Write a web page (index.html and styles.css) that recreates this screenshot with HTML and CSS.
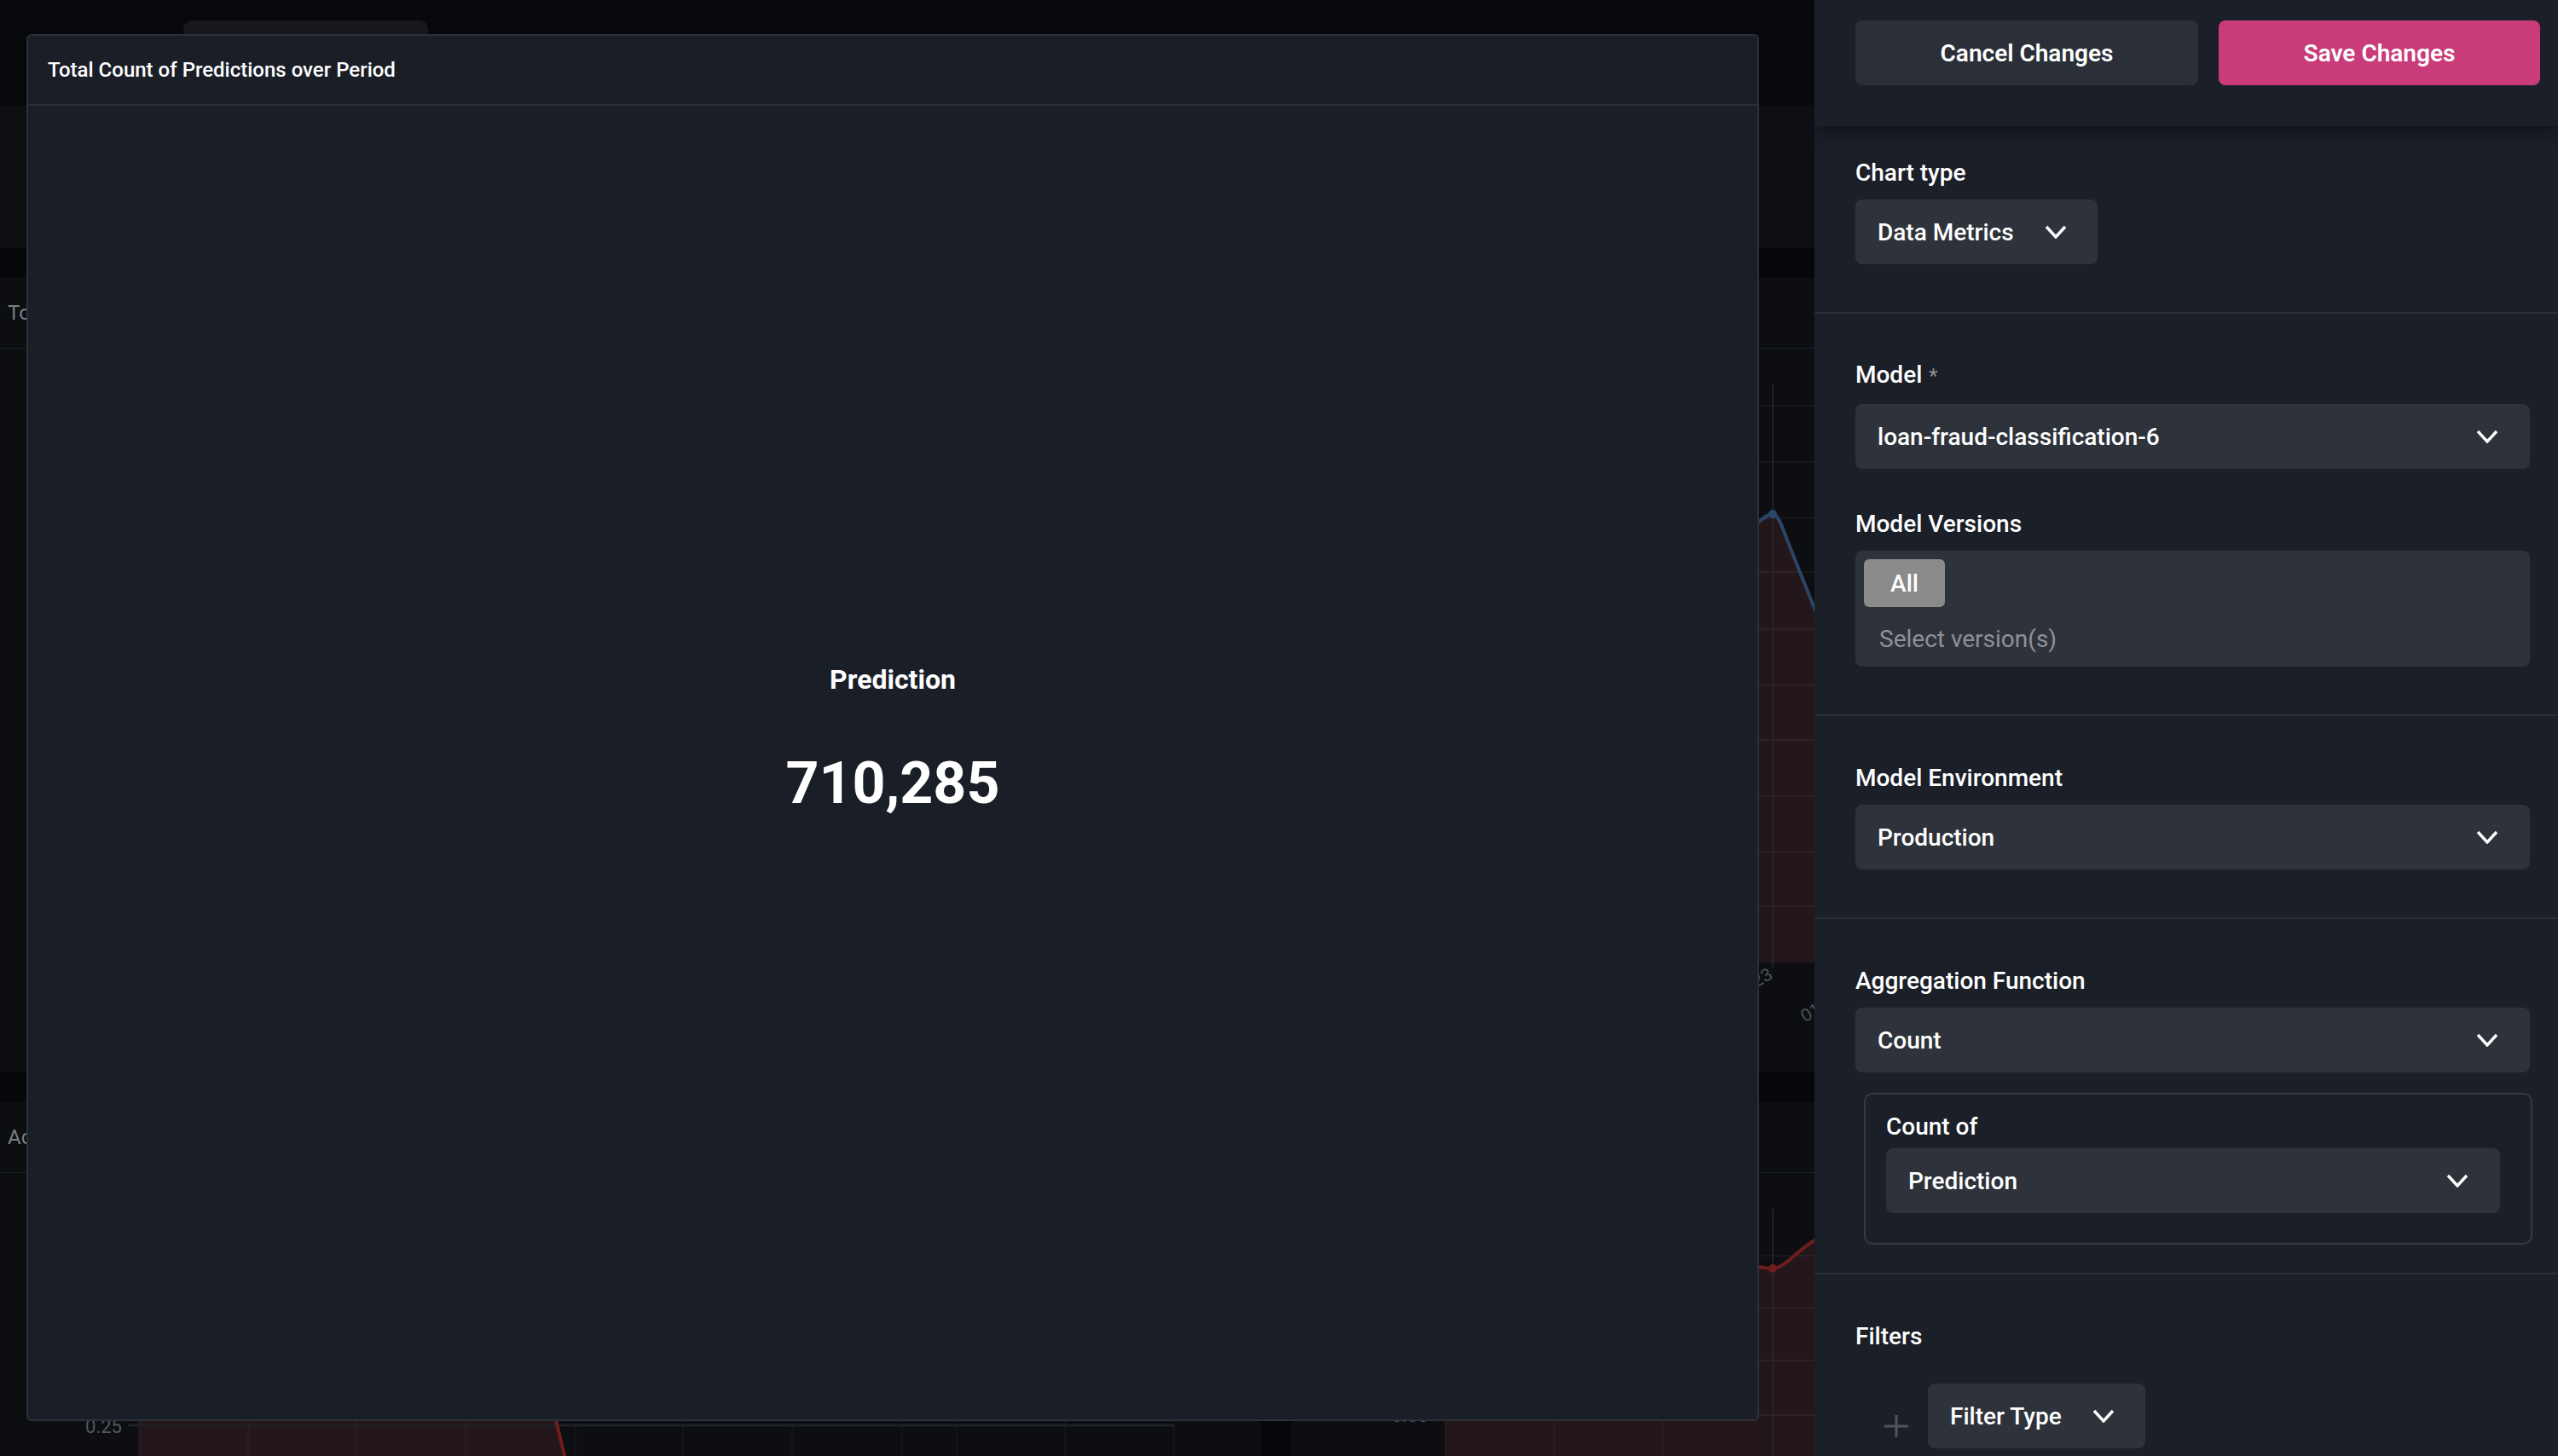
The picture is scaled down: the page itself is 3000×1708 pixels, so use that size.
FILE: index.html
```html
<!DOCTYPE html>
<html>
<head>
<meta charset="utf-8">
<title>Edit Chart</title>
<link rel="stylesheet" href="styles.css">
</head>
<body>
<div class="app">
  <header class="topbar"><div class="tab"></div></header>
  <div class="subbar"></div>
  <main class="board">
    <section class="card">
      <div class="card-title">Total Count of Predictions over Period</div>
    </section>
    <section class="card">
      <div class="card-title">Prediction Distribution over Period</div>
      <svg class="plot" width="1486" height="849" viewBox="0 0 1486 849">
        <g class="vgrid">
          <line x1="181" y1="67" x2="181" y2="720"/><line x1="309" y1="67" x2="309" y2="720"/><line x1="436" y1="67" x2="436" y2="720"/><line x1="691" y1="67" x2="691" y2="720"/><line x1="819" y1="67" x2="819" y2="720"/><line x1="946" y1="67" x2="946" y2="720"/>
        </g>
        <path class="area-red" d="M181 300 C300 260 450 215 549 203 C556 197 560 194 565 194 C572 194 577 212 583 227 L660 420 C700 500 800 520 1000 480 L1460 400 L1460 720 L181 720 Z"/>
        <g class="hgrid">
          <line x1="181" y1="67" x2="1460" y2="67"/><line x1="181" y1="133" x2="1460" y2="133"/><line x1="181" y1="199" x2="1460" y2="199"/><line x1="181" y1="262" x2="1460" y2="262"/><line x1="181" y1="329" x2="1460" y2="329"/><line x1="181" y1="395" x2="1460" y2="395"/><line x1="181" y1="459" x2="1460" y2="459"/><line x1="181" y1="525" x2="1460" y2="525"/><line x1="181" y1="590" x2="1460" y2="590"/><line x1="181" y1="654" x2="1460" y2="654"/>
        </g>
        <line class="cross" x1="565" y1="41" x2="565" y2="727"/>
        <path class="line-blue" d="M181 300 C300 260 450 215 549 203 C556 197 560 194 565 194 C572 194 577 212 583 227 L660 420 C700 500 800 520 1000 480 L1460 400"/>
        <circle class="dot-blue" cx="565" cy="194" r="5"/>
        <text class="axis-label" transform="translate(566 738) rotate(-30)" text-anchor="end">01/22/2023</text>
        <text class="axis-label" transform="translate(694 738) rotate(-30)" text-anchor="end">01/23/2023</text>
      </svg>
    </section>
    <section class="card">
      <div class="card-title">Accuracy over Period</div>
      <svg class="plot" width="1479" height="340" viewBox="0 0 1479 340">
        <path class="area-red" d="M163 0 L560 0 C600 0 630 120 652 290 L664 340 L163 340 Z"/>
        <g class="vgrid">
          <line x1="163" y1="0" x2="163" y2="340"/><line x1="291" y1="0" x2="291" y2="340"/><line x1="418" y1="0" x2="418" y2="340"/><line x1="546" y1="0" x2="546" y2="340"/><line x1="675" y1="0" x2="675" y2="340"/><line x1="801" y1="0" x2="801" y2="340"/><line x1="929" y1="0" x2="929" y2="340"/><line x1="1058" y1="0" x2="1058" y2="340"/><line x1="1122" y1="0" x2="1122" y2="340"/><line x1="1249" y1="0" x2="1249" y2="340"/><line x1="1377" y1="0" x2="1377" y2="340"/>
        </g>
        <line class="axis" x1="150" y1="296" x2="1377" y2="296"/>
        <path class="line-red" d="M560 0 C600 0 630 120 652 290 L664 340"/>
        <text class="tick-label" x="143" y="305" text-anchor="end">0.25</text>
      </svg>
    </section>
    <section class="card">
      <div class="card-title">Prediction Score over Period</div>
      <svg class="plot" width="1486" height="340" viewBox="0 0 1486 340">
        <path class="area-red" d="M181 150 C300 120 450 100 549 110 C555 111 560 112 565 112 C578 112 595 90 614 79 C700 40 900 60 1460 100 L1460 340 L181 340 Z"/>
        <g class="vgrid">
          <line x1="181" y1="0" x2="181" y2="340"/><line x1="309" y1="0" x2="309" y2="340"/><line x1="436" y1="0" x2="436" y2="340"/><line x1="691" y1="0" x2="691" y2="340"/><line x1="819" y1="0" x2="819" y2="340"/>
        </g>
        <g class="hgrid">
          <line x1="181" y1="97" x2="1460" y2="97"/><line x1="181" y1="158" x2="1460" y2="158"/><line x1="181" y1="220" x2="1460" y2="220"/><line x1="170" y1="284" x2="1460" y2="284"/>
        </g>
        <line class="cross" x1="565" y1="42" x2="565" y2="340"/>
        <path class="line-red" d="M181 150 C300 120 450 100 549 110 C555 111 560 112 565 112 C578 112 595 90 614 79 C700 40 900 60 1460 100"/>
        <circle class="dot-red" cx="565" cy="112" r="5"/>
        <text class="tick-label" x="161" y="292" text-anchor="end">0.50</text>
      </svg>
    </section>
  </main>
</div>

<div class="modal">
  <div class="modal-head">Total Count of Predictions over Period</div>
  <div class="modal-body">
    <div class="metric-name">Prediction</div>
    <div class="metric-value">710,285</div>
  </div>
</div>

<aside class="drawer">
  <div class="drawer-head">
    <button class="btn btn-cancel">Cancel Changes</button>
    <button class="btn btn-save">Save Changes</button>
  </div>
  <div class="drawer-body">
    <section class="group first">
      <div class="label">Chart type</div>
      <div class="select inline"><span>Data Metrics</span><svg class="chev" viewBox="0 0 26 16"><polyline points="2,2 13,14 24,2"/></svg></div>
    </section>
    <section class="group model-group">
      <div class="field">
        <div class="label model">Model<span class="req">*</span></div>
        <div class="select"><span>loan-fraud-classification-6</span><svg class="chev" viewBox="0 0 26 16"><polyline points="2,2 13,14 24,2"/></svg></div>
      </div>
      <div class="field">
        <div class="label">Model Versions</div>
        <div class="versions">
          <div class="chip">All</div>
          <div class="placeholder">Select version(s)</div>
        </div>
      </div>
    </section>
    <section class="group">
      <div class="label">Model Environment</div>
      <div class="select"><span>Production</span><svg class="chev" viewBox="0 0 26 16"><polyline points="2,2 13,14 24,2"/></svg></div>
    </section>
    <section class="group agg">
      <div class="label">Aggregation Function</div>
      <div class="select"><span>Count</span><svg class="chev" viewBox="0 0 26 16"><polyline points="2,2 13,14 24,2"/></svg></div>
      <div class="count-box">
        <div class="label tight">Count of</div>
        <div class="select full"><span>Prediction</span><svg class="chev" viewBox="0 0 26 16"><polyline points="2,2 13,14 24,2"/></svg></div>
      </div>
    </section>
    <section class="group last">
      <div class="label">Filters</div>
      <div class="filter-row">
        <svg class="plus" viewBox="0 0 28 26"><line x1="14" y1="0" x2="14" y2="26"/><line x1="0" y1="13" x2="28" y2="13"/></svg>
        <div class="select inline"><span>Filter Type</span><svg class="chev" viewBox="0 0 26 16"><polyline points="2,2 13,14 24,2"/></svg></div>
      </div>
    </section>
  </div>
</aside>
</body>
</html>
```

FILE: styles.css
```css
* { box-sizing: border-box; }

body {
  margin: 0;
  width: 3000px;
  height: 1708px;
  overflow: hidden;
  position: relative;
  background: #07080b;
  font-family: Roboto, "Noto Sans", "Liberation Sans", sans-serif;
  color: #fff;
}

/* ---------- dimmed dashboard behind ---------- */
.app {
  display: flex;
  flex-direction: column;
  height: 1708px;
}

.topbar {
  flex: none;
  height: 123px;
  background: #07080b;
  padding: 24px 0 0 215px;
}

.tab {
  width: 287px;
  height: 99px;
  background: #16181c;
  border-radius: 10px 10px 0 0;
}

.subbar {
  flex: none;
  height: 168px;
  background: #0d0f13;
}

.board {
  flex: 1;
  min-height: 0;
  background: #05070a;
  padding-top: 35px;
  display: grid;
  grid-template-columns: 1479px 1fr;
  grid-template-rows: 932px 1fr;
  gap: 35px;
}

.card {
  background: #0c0e12;
  display: flex;
  flex-direction: column;
  overflow: hidden;
  min-height: 0;
}

.card-title {
  flex: none;
  height: 83px;
  border-bottom: 1px solid #1c1f24;
  display: flex;
  align-items: center;
  padding-left: 9px;
  font-size: 24px;
  color: #7b7e83;
  white-space: nowrap;
}

.plot { display: block; flex: none; }

.vgrid line { stroke: rgba(255, 255, 255, 0.045); stroke-width: 1.5; }
.hgrid line { stroke: rgba(255, 255, 255, 0.06); stroke-width: 1.5; }
.area-red { fill: #24171b; }
.cross { stroke: #26292e; stroke-width: 1.5; }
.line-blue { fill: none; stroke: #2b4566; stroke-width: 4; }
.dot-blue { fill: #2b4566; }
.line-red { fill: none; stroke: #6e1c1d; stroke-width: 4; }
.dot-red { fill: #6e1c1d; }
.axis { stroke: #1e2126; stroke-width: 3; }
.axis-label { font-family: "Liberation Sans", sans-serif; font-size: 21px; fill: #4f5258; }
.tick-label { font-family: Roboto, sans-serif; font-size: 22px; fill: #55585e; }

/* ---------- modal ---------- */
.modal {
  position: absolute;
  left: 31px;
  top: 40px;
  width: 2032px;
  height: 1627px;
  background: #1a1e27;
  border: 2px solid #2b3039;
  border-radius: 6px;
  display: flex;
  flex-direction: column;
}

.modal-head {
  flex: none;
  height: 82px;
  border-bottom: 2px solid #2b3039;
  display: flex;
  align-items: center;
  padding-left: 23px;
  font-size: 24px;
  font-weight: 500;
}

.modal-body {
  flex: 1;
  display: flex;
  flex-direction: column;
  align-items: center;
  padding-top: 653px;
}

.metric-name {
  font-size: 32px;
  line-height: 40px;
  font-weight: 700;
}

.metric-value {
  margin-top: 62px;
  font-size: 68px;
  line-height: 80px;
  font-weight: 700;
}

/* ---------- side drawer ---------- */
.drawer {
  position: absolute;
  top: 0;
  right: 0;
  width: 872px;
  height: 1708px;
  background: #1b1f28;
  display: flex;
  flex-direction: column;
  overflow: hidden;
}

.drawer-head {
  flex: none;
  position: relative;
  z-index: 1;
  height: 148px;
  padding: 24px 0 0 48px;
  display: flex;
  gap: 24px;
  background: #1b1f28;
  box-shadow: 0 8px 16px rgba(0, 0, 0, 0.35);
}

.btn {
  height: 76px;
  border: none;
  border-radius: 8px;
  font-family: inherit;
  font-size: 28px;
  font-weight: 600;
  color: #fff;
  padding: 0;
}

.btn-cancel { width: 402px; background: #2a2f38; }
.btn-save { width: 377px; background: #c93c79; }

.drawer-body { flex: 1; }

.group {
  padding: 53px 0 56px 48px;
  border-bottom: 2px solid #2a2e36;
}

.group.first { padding-top: 35px; }
.group.model-group { padding-top: 52px; }
.group.agg { padding-bottom: 33px; }
.group.last { border-bottom: none; }

.field + .field { margin-top: 45px; }

.label {
  font-size: 28px;
  line-height: 40px;
  font-weight: 500;
  margin-bottom: 11px;
}

.label.model { margin-bottom: 13px; }
.label.tight { margin-bottom: 5px; }

.req {
  margin-left: 8px;
  color: #8e9196;
  font-size: 24px;
  font-weight: 400;
}

.select {
  width: 791px;
  height: 76px;
  background: #2e333b;
  border-radius: 8px;
  display: flex;
  align-items: center;
  justify-content: space-between;
  padding: 0 37px 0 26px;
  font-size: 28px;
  font-weight: 500;
  white-space: nowrap;
}

.select.inline {
  width: fit-content;
  gap: 36px;
  padding-right: 36px;
}

.select.full { width: 100%; }

.chev {
  flex: none;
  width: 26px;
  height: 16px;
}

.chev polyline {
  fill: none;
  stroke: #fff;
  stroke-width: 3.4;
}

.versions {
  width: 791px;
  height: 136px;
  background: #2e333b;
  border-radius: 8px;
  padding: 10px 10px 0 10px;
}

.chip {
  width: 95px;
  height: 56px;
  background: #8a8a8a;
  border-radius: 6px;
  display: flex;
  align-items: center;
  justify-content: center;
  font-size: 28px;
  font-weight: 500;
}

.placeholder {
  height: 60px;
  margin-top: 7px;
  display: flex;
  align-items: center;
  padding-left: 18px;
  font-size: 28px;
  color: #8e9196;
}

.count-box {
  width: 784px;
  margin: 24px 0 0 10px;
  border: 2px solid #343942;
  border-radius: 10px;
  padding: 18px 36px 35px 24px;
}

.filter-row {
  display: flex;
  align-items: flex-start;
  gap: 23px;
  margin-top: 35px;
  padding-left: 34px;
}

.plus {
  flex: none;
  width: 28px;
  height: 26px;
  margin-top: 37px;
}

.plus line {
  stroke: #50545a;
  stroke-width: 3;
}
```
